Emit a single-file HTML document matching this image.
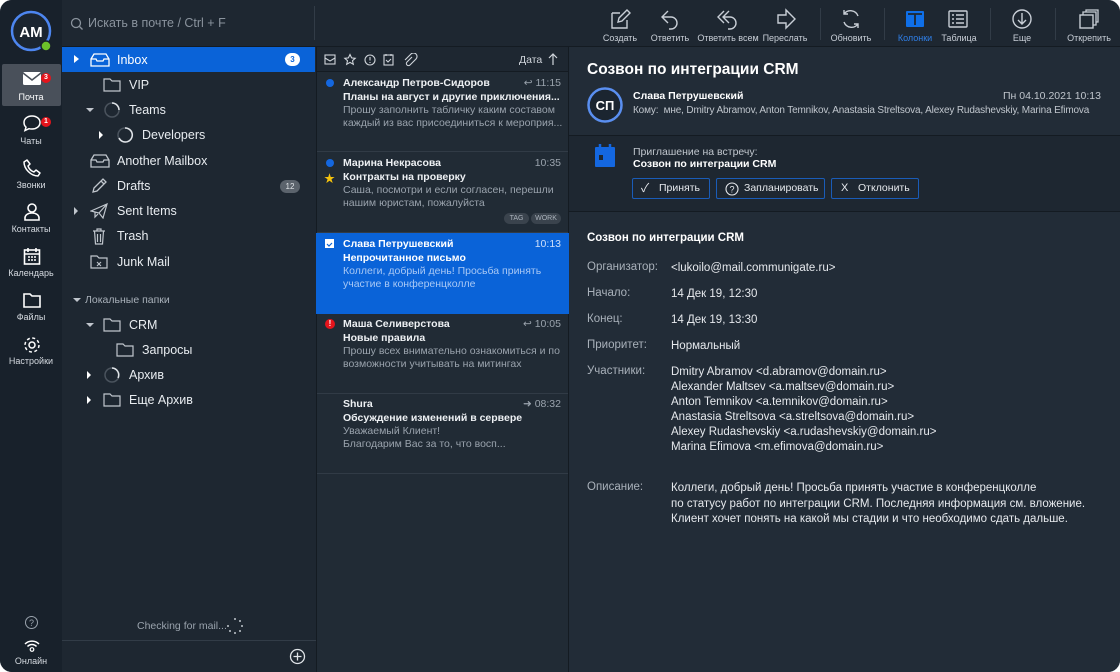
<!DOCTYPE html>
<html><head><meta charset="utf-8"><style>
*{margin:0;padding:0;box-sizing:border-box}
body{width:1120px;height:672px;background:#fff;font-family:"Liberation Sans","Noto Sans CJK SC",sans-serif;overflow:hidden;position:relative}
.win{position:absolute;left:0;top:0;width:1120px;height:672px;border-radius:12px;overflow:hidden;background:#1e2731}
.a{position:absolute;white-space:nowrap}
.side{left:0;top:0;width:62px;height:672px;background:#18212b}
.nav{left:0;width:62px;text-align:center;color:#d5dae0;font-size:9px}
.fp{left:62px;top:0;width:254px;height:672px;background:#1e2731}
.f{color:#e8ecf0;font-size:12.5px}
.ml{left:316px;top:47px;width:253px;height:625px;background:#212b35;border-left:1px solid #141b22;border-right:1px solid #141b22}
.rp{left:569px;top:47px;width:551px;height:625px;background:#222c37}
.tb{left:316px;top:0;width:804px;height:47px;background:#1e2731;border-bottom:1px solid #141b22}
.tl{color:#c8ced6;font-size:9px;text-align:center;width:70px}
.msg{left:0;width:251px;height:80px;border-bottom:1px solid #313b46}
.nm{color:#eef1f4;font-weight:bold;font-size:10.5px;left:26px}
.sb{color:#eef1f4;font-weight:bold;font-size:10.5px;left:26px}
.pv{color:#9aa3ad;font-size:10.5px;left:26px;line-height:13px}
.tm{color:#9aa3ad;font-size:10.5px;right:7px}
.lb{color:#a9b1ba;font-size:11.5px;left:18px}
.vl{color:#e6e9ed;font-size:11.5px;left:102px;line-height:15px}
svg{position:absolute}
</style></head><body><div class="win">
<div class="a side"></div>
<svg style="left:10px;top:10px" width="44" height="44"><circle cx="21" cy="21" r="19" fill="#1b2530" stroke="#4d86f0" stroke-width="2.5"/><text x="21" y="27" fill="#fff" font-size="15" font-weight="bold" text-anchor="middle" font-family="Liberation Sans">AM</text><circle cx="36" cy="36" r="5" fill="#6cc12a" stroke="#18212b" stroke-width="1.5"/></svg>
<div class="a" style="left:2px;top:64px;width:59px;height:42px;background:#49505a;border-radius:2px"></div>
<svg style="left:22px;top:71px" width="22" height="16"><rect x="1" y="1" width="18" height="13" rx="1.5" fill="#fff"/><path d="M1 2l9 7 9-7" stroke="#49505a" stroke-width="1.5" fill="none"/></svg>
<div class="a" style="left:41px;top:73px;width:10px;height:10px;border-radius:5px;background:#e5141c;color:#fff;font-size:7px;font-weight:bold;text-align:center;line-height:10px">3</div>
<div class="a nav" style="top:92px;color:#fff">Почта</div>
<svg style="left:22px;top:114px" width="20" height="18"><path d="M10 2c5 0 8 3 8 6.5S15 15 10 15c-1 0-2 0-3-.3L3 16.5l1-3.3C2.7 12 2 10.5 2 8.5 2 5 5 2 10 2z" fill="none" stroke="#fff" stroke-width="1.5"/></svg>
<div class="a" style="left:41px;top:117px;width:10px;height:10px;border-radius:5px;background:#e5141c;color:#fff;font-size:7px;font-weight:bold;text-align:center;line-height:10px">1</div>
<div class="a nav" style="top:136px">Чаты</div>
<svg style="left:22px;top:158px" width="20" height="20"><path d="M5 2l3 4-2 2c1 3 3 5 6 6l2-2 4 3-2 3c-7 0-14-7-14-14z" fill="none" stroke="#fff" stroke-width="1.5" stroke-linejoin="round"/></svg>
<div class="a nav" style="top:180px">Звонки</div>
<svg style="left:22px;top:202px" width="20" height="20"><circle cx="10" cy="6" r="4" fill="none" stroke="#fff" stroke-width="1.6"/><path d="M3 18v-2c0-3 3-5 7-5s7 2 7 5v2z" fill="none" stroke="#fff" stroke-width="1.6"/></svg>
<div class="a nav" style="top:224px">Контакты</div>
<svg style="left:22px;top:246px" width="20" height="20"><rect x="2.5" y="4" width="15" height="14" fill="none" stroke="#fff" stroke-width="1.6"/><path d="M6 2v4M14 2v4M2.5 8h15" stroke="#fff" stroke-width="1.6"/><path d="M6 11h2M9 11h2M12 11h2M6 14h2M9 14h2M12 14h2" stroke="#fff" stroke-width="1.6"/></svg>
<div class="a nav" style="top:268px">Календарь</div>
<svg style="left:22px;top:291px" width="20" height="18"><path d="M2 3h6l2 2h8v11H2z" fill="none" stroke="#fff" stroke-width="1.6"/></svg>
<div class="a nav" style="top:312px">Файлы</div>
<svg style="left:22px;top:335px" width="20" height="20"><circle cx="10" cy="10" r="3" fill="none" stroke="#fff" stroke-width="1.5"/><circle cx="10" cy="10" r="7" fill="none" stroke="#fff" stroke-width="1.5" stroke-dasharray="3 2.5"/></svg>
<div class="a nav" style="top:356px">Настройки</div>
<svg style="left:24px;top:615px" width="15" height="15"><circle cx="7.5" cy="7.5" r="6" fill="none" stroke="#9aa3ad" stroke-width="1"/><text x="7.5" y="11" fill="#9aa3ad" font-size="9" text-anchor="middle">?</text></svg>
<svg style="left:23px;top:639px" width="18" height="14"><path d="M2 5a10 10 0 0 1 14 0M4.5 7.5a6 6 0 0 1 9 0" fill="none" stroke="#fff" stroke-width="1.5"/><circle cx="9" cy="10.5" r="1.8" fill="none" stroke="#fff" stroke-width="1.2"/></svg>
<div class="a nav" style="top:656px">Онлайн</div>

<div class="a fp"></div>
<svg style="left:70px;top:17px" width="14" height="14"><circle cx="6" cy="6" r="4.5" fill="none" stroke="#8a939d" stroke-width="1.3"/><path d="M9.5 9.5l3 3" stroke="#8a939d" stroke-width="1.3"/></svg>
<div class="a" style="left:88px;top:16px;color:#8a939d;font-size:12.5px">Искать в почте / Ctrl + F</div>
<div class="a" style="left:62px;top:46px;width:254px;height:1px;background:#141b22"></div>
<div class="a" style="left:62px;top:47px;width:253px;height:25px;background:#0a63d8"></div>
<div class="a" style="left:74px;top:55px;border-left:5px solid #fff;border-top:4px solid transparent;border-bottom:4px solid transparent"></div>
<svg style="left:89px;top:52px" width="22" height="16"><path d="M2 7l3-5h12l3 5v7H2z M2 7h5l1 2h6l1-2h5" fill="none" stroke="#fff" stroke-width="1.3"/></svg>
<div class="a f" style="left:117px;top:53px;color:#fff">Inbox</div>
<div class="a" style="left:285px;top:53px;width:15px;height:13px;border-radius:7px;background:#fff;color:#0a63d8;font-size:8px;font-weight:bold;text-align:center;line-height:13px">3</div>
<svg style="left:103px;top:77px" width="18" height="15"><path d="M1 2h6l2 2h8v10H1z" fill="none" stroke="#c0c6cd" stroke-width="1.2"/></svg>
<div class="a f" style="left:129px;top:78px">VIP</div>
<div class="a" style="left:86px;top:108px;border-top:4px solid #c0c6cd;border-left:4px solid transparent;border-right:4px solid transparent"></div>
<svg style="left:103px;top:101px" width="18" height="18"><circle cx="9" cy="9" r="7" fill="none" stroke="#4a535d" stroke-width="1.5"/><path d="M9 2a7 7 0 0 1 7 7" fill="none" stroke="#e0e4e8" stroke-width="1.5"/></svg>
<div class="a f" style="left:129px;top:103px">Teams</div>
<div class="a" style="left:99px;top:131px;border-left:4px solid #fff;border-top:4px solid transparent;border-bottom:4px solid transparent"></div>
<svg style="left:116px;top:126px" width="18" height="18"><circle cx="9" cy="9" r="7" fill="none" stroke="#4a535d" stroke-width="1.5"/><path d="M9 2a7 7 0 1 1-6 10" fill="none" stroke="#e0e4e8" stroke-width="1.5"/></svg>
<div class="a f" style="left:142px;top:128px">Developers</div>
<svg style="left:89px;top:153px" width="22" height="16"><path d="M2 7l3-5h12l3 5v7H2z M2 7h5l1 2h6l1-2h5" fill="none" stroke="#c0c6cd" stroke-width="1.3"/></svg>
<div class="a f" style="left:117px;top:154px">Another Mailbox</div>
<svg style="left:90px;top:177px" width="18" height="18"><path d="M3 15l1-4 9-9 3 3-9 9zM11 4l3 3" fill="none" stroke="#c0c6cd" stroke-width="1.3"/></svg>
<div class="a f" style="left:117px;top:179px">Drafts</div>
<div class="a" style="left:280px;top:180px;width:20px;height:13px;border-radius:7px;background:#5b636c;color:#e0e4e8;font-size:8px;text-align:center;line-height:13px">12</div>
<div class="a" style="left:74px;top:207px;border-left:4px solid #c0c6cd;border-top:4px solid transparent;border-bottom:4px solid transparent"></div>
<svg style="left:90px;top:203px" width="18" height="16"><path d="M1 8L17 1l-4 14-4-5zM9 10l8-9M5 9v5l3-3" fill="none" stroke="#c0c6cd" stroke-width="1.2"/></svg>
<div class="a f" style="left:117px;top:204px">Sent Items</div>
<svg style="left:91px;top:228px" width="16" height="17"><path d="M2 3h12M6 3V1h4v2M3.5 3l1 13h7l1-13M6.5 6v8M9.5 6v8" fill="none" stroke="#c0c6cd" stroke-width="1.2"/></svg>
<div class="a f" style="left:117px;top:229px">Trash</div>
<svg style="left:90px;top:254px" width="18" height="15"><path d="M1 2h6l2 2h8v10H1z" fill="none" stroke="#c0c6cd" stroke-width="1.2"/><path d="M7 8l4 4M11 8l-4 4" stroke="#c0c6cd" stroke-width="1.1"/></svg>
<div class="a f" style="left:117px;top:255px">Junk Mail</div>
<div class="a" style="left:73px;top:298px;border-top:4px solid #c0c6cd;border-left:4px solid transparent;border-right:4px solid transparent"></div>
<div class="a" style="left:85px;top:294px;color:#a9b1ba;font-size:10.5px">Локальные папки</div>
<div class="a" style="left:86px;top:323px;border-top:4px solid #c0c6cd;border-left:4px solid transparent;border-right:4px solid transparent"></div>
<svg style="left:103px;top:317px" width="18" height="15"><path d="M1 2h6l2 2h8v10H1z" fill="none" stroke="#c0c6cd" stroke-width="1.2"/></svg>
<div class="a f" style="left:129px;top:318px">CRM</div>
<svg style="left:116px;top:342px" width="18" height="15"><path d="M1 2h6l2 2h8v10H1z" fill="none" stroke="#c0c6cd" stroke-width="1.2"/></svg>
<div class="a f" style="left:142px;top:343px">Запросы</div>
<div class="a" style="left:87px;top:371px;border-left:4px solid #fff;border-top:4px solid transparent;border-bottom:4px solid transparent"></div>
<svg style="left:103px;top:366px" width="18" height="18"><circle cx="9" cy="9" r="7" fill="none" stroke="#4a535d" stroke-width="1.5"/><path d="M9 2a7 7 0 0 1 6 10" fill="none" stroke="#e0e4e8" stroke-width="1.5"/></svg>
<div class="a f" style="left:129px;top:368px">Архив</div>
<div class="a" style="left:87px;top:396px;border-left:4px solid #fff;border-top:4px solid transparent;border-bottom:4px solid transparent"></div>
<svg style="left:103px;top:392px" width="18" height="15"><path d="M1 2h6l2 2h8v10H1z" fill="none" stroke="#c0c6cd" stroke-width="1.2"/></svg>
<div class="a f" style="left:129px;top:393px">Еще Архив</div>
<div class="a" style="left:137px;top:620px;color:#9aa3ad;font-size:10.5px">Checking for mail...</div>
<svg style="left:226px;top:617px" width="18" height="18"><g fill="#c0c6cd"><circle cx="9" cy="2" r="1"/><circle cx="14" cy="4" r="1"/><circle cx="16" cy="9" r="1"/><circle cx="14" cy="14" r="1"/><circle cx="9" cy="16" r="1"/><circle cx="4" cy="14" r="1"/><circle cx="2" cy="9" r="1"/></g></svg>
<div class="a" style="left:62px;top:640px;width:254px;height:1px;background:#323c47"></div>
<svg style="left:289px;top:648px" width="17" height="17"><circle cx="8.5" cy="8.5" r="7" fill="none" stroke="#e0e4e8" stroke-width="1.3"/><path d="M8.5 4.5v8M4.5 8.5h8" stroke="#e0e4e8" stroke-width="1.3"/></svg>

<div class="a tb"></div>
<div class="a" style="left:314px;top:6px;width:1px;height:34px;background:#323c47"></div>
<svg style="left:609px;top:8px" width="22" height="22"><path d="M3 5h8M3 5v15h15v-8" fill="none" stroke="#c8ced6" stroke-width="1.4"/><path d="M9 14l1-4 8-8 3 3-8 8z" fill="none" stroke="#c8ced6" stroke-width="1.4"/></svg>
<div class="a tl" style="left:585px;top:33px">Создать</div>
<svg style="left:659px;top:8px" width="22" height="22"><path d="M9 3L3 9l6 6M3 9h9a6 6 0 0 1 0 12h-2" fill="none" stroke="#c8ced6" stroke-width="1.4"/></svg>
<div class="a tl" style="left:635px;top:33px">Ответить</div>
<svg style="left:716px;top:8px" width="24" height="22"><path d="M8 3L2 9l6 6M13 3L7 9l6 6M7 9h7a6 6 0 0 1 0 12h-2" fill="none" stroke="#c8ced6" stroke-width="1.4"/></svg>
<div class="a tl" style="left:693px;top:33px">Ответить всем</div>
<svg style="left:775px;top:8px" width="22" height="22"><path d="M3 7h8V2l9 9-9 9v-5H3z" fill="none" stroke="#c8ced6" stroke-width="1.4"/></svg>
<div class="a tl" style="left:750px;top:33px">Переслать</div>
<div class="a" style="left:820px;top:8px;width:1px;height:32px;background:#323c47"></div>
<svg style="left:840px;top:8px" width="22" height="22"><path d="M18 8A8 8 0 0 0 4 6M4 14a8 8 0 0 0 14 2M4 2v4h4M18 20v-4h-4" fill="none" stroke="#c8ced6" stroke-width="1.4"/></svg>
<div class="a tl" style="left:816px;top:33px">Обновить</div>
<div class="a" style="left:884px;top:8px;width:1px;height:32px;background:#323c47"></div>
<svg style="left:904px;top:9px" width="22" height="20"><rect x="2" y="2" width="18" height="16" rx="1" fill="#0f6fe8"/><path d="M11 5v11M4 5h14" stroke="#1e2731" stroke-width="1.8"/></svg>
<div class="a tl" style="left:880px;top:33px;color:#2f7fe8">Колонки</div>
<svg style="left:947px;top:9px" width="22" height="20"><rect x="2" y="2" width="18" height="16" rx="1" fill="none" stroke="#c8ced6" stroke-width="1.4"/><path d="M5 6h2M9 6h8M5 10h2M9 10h8M5 14h2M9 14h8" stroke="#c8ced6" stroke-width="1.4"/></svg>
<div class="a tl" style="left:924px;top:33px">Таблица</div>
<div class="a" style="left:990px;top:8px;width:1px;height:32px;background:#323c47"></div>
<svg style="left:1011px;top:8px" width="22" height="22"><circle cx="11" cy="11" r="9" fill="none" stroke="#c8ced6" stroke-width="1.4"/><path d="M11 5v11M7 12l4 4 4-4" fill="none" stroke="#c8ced6" stroke-width="1.4"/></svg>
<div class="a tl" style="left:987px;top:33px">Еще</div>
<div class="a" style="left:1055px;top:8px;width:1px;height:32px;background:#323c47"></div>
<svg style="left:1078px;top:8px" width="22" height="22"><rect x="2" y="7" width="13" height="13" fill="none" stroke="#c8ced6" stroke-width="1.4"/><path d="M5 7V4h13v13h-3M8 4V2h12v12h-2" fill="none" stroke="#c8ced6" stroke-width="1.3"/></svg>
<div class="a tl" style="left:1054px;top:33px">Открепить</div>

<div class="a ml">
<div class="a" style="left:0;top:0;width:251px;height:25px;border-bottom:1px solid #141b22;background:#1e2731"></div>
<svg style="left:7px;top:6px" width="100" height="14"><g fill="none" stroke="#d0d5db" stroke-width="1.1"><rect x="1" y="2" width="10" height="9"/><path d="M1 5l5 3 5-3"/><path d="M26 1.5l1.6 3.4 3.6.4-2.7 2.4.8 3.6-3.3-1.9-3.3 1.9.8-3.6-2.7-2.4 3.6-.4z"/><circle cx="46" cy="7" r="5"/><path d="M46 4v3.5M46 9v1"/><rect x="60" y="2" width="9" height="10"/><path d="M62 7l2 2 3-3M62 1v2M67 1v2"/><path d="M88 4l-5 5a2 2 0 0 0 3 3l6-6a3.5 3.5 0 0 0-5-5l-6 6"/></g></svg>
<div class="a" style="left:202px;top:7px;color:#d0d5db;font-size:10.5px">Дата</div>
<svg style="left:230px;top:5px" width="12" height="14"><path d="M6 13V2M2 6l4-4 4 4" fill="none" stroke="#d0d5db" stroke-width="1.2"/></svg>

<div class="a msg" style="top:25px"></div>
<div class="a" style="left:9px;top:32px;width:8px;height:8px;border-radius:4px;background:#1467e0"></div>
<div class="a nm" style="top:30px">Александр Петров-Сидоров</div>
<div class="a tm" style="top:30px">↩ 11:15</div>
<div class="a sb" style="top:44px">Планы на август и другие приключения...</div>
<div class="a pv" style="top:57px">Прошу заполнить табличку каким составом<br>каждый из вас присоединиться к мероприя...</div>

<div class="a msg" style="top:106px"></div>
<div class="a" style="left:9px;top:112px;width:8px;height:8px;border-radius:4px;background:#1467e0"></div>
<div class="a" style="left:7px;top:123px;color:#f4c20d;font-size:11px">★</div>
<div class="a nm" style="top:110px">Марина Некрасова</div>
<div class="a tm" style="top:110px">10:35</div>
<div class="a sb" style="top:124px">Контракты на проверку</div>
<div class="a pv" style="top:137px">Саша, посмотри и если согласен, перешли<br>нашим юристам, пожалуйста</div>
<div class="a" style="left:187px;top:166px;width:25px;height:11px;border-radius:6px;background:#3a434d;color:#aab2bb;font-size:7px;text-align:center;line-height:11px">TAG</div>
<div class="a" style="left:214px;top:166px;width:30px;height:11px;border-radius:6px;background:#3a434d;color:#aab2bb;font-size:7px;text-align:center;line-height:11px">WORK</div>

<div class="a msg" style="top:186px;height:81px;background:#0a63d8;border:none;left:-1px;width:253px"></div>
<svg style="left:7px;top:190px" width="12" height="12"><rect x="1" y="2" width="9" height="9" fill="#fff"/><path d="M3 7l2 2 3-3" stroke="#0a63d8" stroke-width="1.2" fill="none"/></svg>
<div class="a nm" style="top:191px;color:#fff">Слава Петрушевский</div>
<div class="a tm" style="top:191px;color:#cfe0fa">10:13</div>
<div class="a sb" style="top:205px;color:#fff">Непрочитанное письмо</div>
<div class="a pv" style="top:218px;color:#a8c8f5">Коллеги, добрый день! Просьба принять<br>участие в конференцколле</div>

<div class="a msg" style="top:267px"></div>
<div class="a" style="left:8px;top:272px;width:10px;height:10px;border-radius:5px;background:#e5141c;color:#fff;font-size:8px;font-weight:bold;text-align:center;line-height:10px">!</div>
<div class="a nm" style="top:271px">Маша Селиверстова</div>
<div class="a tm" style="top:271px">↩ 10:05</div>
<div class="a sb" style="top:285px">Новые правила</div>
<div class="a pv" style="top:298px">Прошу всех внимательно ознакомиться и по<br>возможности учитывать на митингах</div>

<div class="a msg" style="top:347px"></div>
<div class="a nm" style="top:351px">Shura</div>
<div class="a tm" style="top:351px">➜ 08:32</div>
<div class="a sb" style="top:365px">Обсуждение изменений в сервере</div>
<div class="a pv" style="top:378px">Уважаемый Клиент!<br>Благодарим Вас за то, что восп...</div>
</div>

<div class="a rp">
<div class="a" style="left:18px;top:14px;color:#fff;font-size:15.5px;font-weight:bold">Созвон по интеграции CRM</div>
<svg style="left:17px;top:39px" width="38" height="38"><circle cx="19" cy="19" r="16.5" fill="#1b2530" stroke="#5a8ff0" stroke-width="2.5"/><text x="19" y="24" fill="#fff" font-size="13" font-weight="bold" text-anchor="middle" font-family="Liberation Sans">СП</text></svg>
<div class="a" style="left:64px;top:43px;color:#fff;font-size:10.5px;font-weight:bold">Слава Петрушевский</div>
<div class="a" style="right:19px;top:43px;color:#c0c6cd;font-size:10.5px">Пн 04.10.2021 10:13</div>
<div class="a" style="left:64px;top:58px;color:#c0c6cd;font-size:10px;letter-spacing:-0.15px">Кому:&nbsp; мне, Dmitry Abramov, Anton Temnikov, Anastasia Streltsova, Alexey Rudashevskiy, Marina Efimova</div>
<div class="a" style="left:0;top:88px;width:551px;height:1px;background:#141b22"></div>
<div class="a" style="left:0;top:89px;width:551px;height:75px;background:#1e2731"></div>
<svg style="left:24px;top:96px" width="24" height="26"><rect x="2" y="4" width="20" height="20" rx="1" fill="#1467e0"/><path d="M7 1v5M17 1v5" stroke="#1467e0" stroke-width="2.5"/><rect x="6" y="12" width="4" height="5" fill="#1e2731"/></svg>
<div class="a" style="left:64px;top:99px;color:#c0c6cd;font-size:10.5px">Приглашение на встречу:</div>
<div class="a" style="left:64px;top:111px;color:#fff;font-size:10.5px;font-weight:bold">Созвон по интеграции CRM</div>
<div class="a" style="left:63px;top:131px;width:78px;height:21px;border:1.5px solid #1a5cb8;border-radius:2px;color:#e6e9ed;font-size:10.5px;line-height:18px;padding-left:26px">Принять</div>
<div class="a" style="left:72px;top:131px;color:#e6e9ed;font-size:12px;line-height:21px">✓</div>
<div class="a" style="left:147px;top:131px;width:109px;height:21px;border:1.5px solid #1a5cb8;border-radius:2px;color:#e6e9ed;font-size:10.5px;line-height:18px;padding-left:27px">Запланировать</div>
<svg style="left:156px;top:135px" width="14" height="14"><circle cx="7" cy="7" r="6" fill="none" stroke="#e6e9ed" stroke-width="1.1"/><text x="7" y="10.5" fill="#e6e9ed" font-size="9" text-anchor="middle">?</text></svg>
<div class="a" style="left:262px;top:131px;width:88px;height:21px;border:1.5px solid #1a5cb8;border-radius:2px;color:#e6e9ed;font-size:10.5px;line-height:18px;padding-left:26px">Отклонить</div>
<div class="a" style="left:272px;top:131px;color:#e6e9ed;font-size:11px;line-height:21px">X</div>
<div class="a" style="left:0;top:164px;width:551px;height:1px;background:#141b22"></div>
<div class="a" style="left:18px;top:185px;color:#fff;font-size:11.5px;font-weight:bold">Созвон по интеграции CRM</div>
<div class="a lb" style="top:214px">Организатор:</div><div class="a vl" style="top:214px">&lt;lukoilo@mail.communigate.ru&gt;</div>
<div class="a lb" style="top:240px">Начало:</div><div class="a vl" style="top:240px">14 Дек 19, 12:30</div>
<div class="a lb" style="top:266px">Конец:</div><div class="a vl" style="top:266px">14 Дек 19, 13:30</div>
<div class="a lb" style="top:292px">Приоритет:</div><div class="a vl" style="top:292px">Нормальный</div>
<div class="a lb" style="top:318px">Участники:</div><div class="a vl" style="top:318px">Dmitry Abramov &lt;d.abramov@domain.ru&gt;<br>Alexander Maltsev &lt;a.maltsev@domain.ru&gt;<br>Anton Temnikov &lt;a.temnikov@domain.ru&gt;<br>Anastasia Streltsova &lt;a.streltsova@domain.ru&gt;<br>Alexey Rudashevskiy &lt;a.rudashevskiy@domain.ru&gt;<br>Marina Efimova &lt;m.efimova@domain.ru&gt;</div>
<div class="a lb" style="top:434px">Описание:</div><div class="a vl" style="top:434px;line-height:15.5px">Коллеги, добрый день! Просьба принять участие в конференцколле<br>по статусу работ по интеграции CRM. Последняя информация см. вложение.<br>Клиент хочет понять на какой мы стадии и что необходимо сдать дальше.</div>
</div>
</div></body></html>
